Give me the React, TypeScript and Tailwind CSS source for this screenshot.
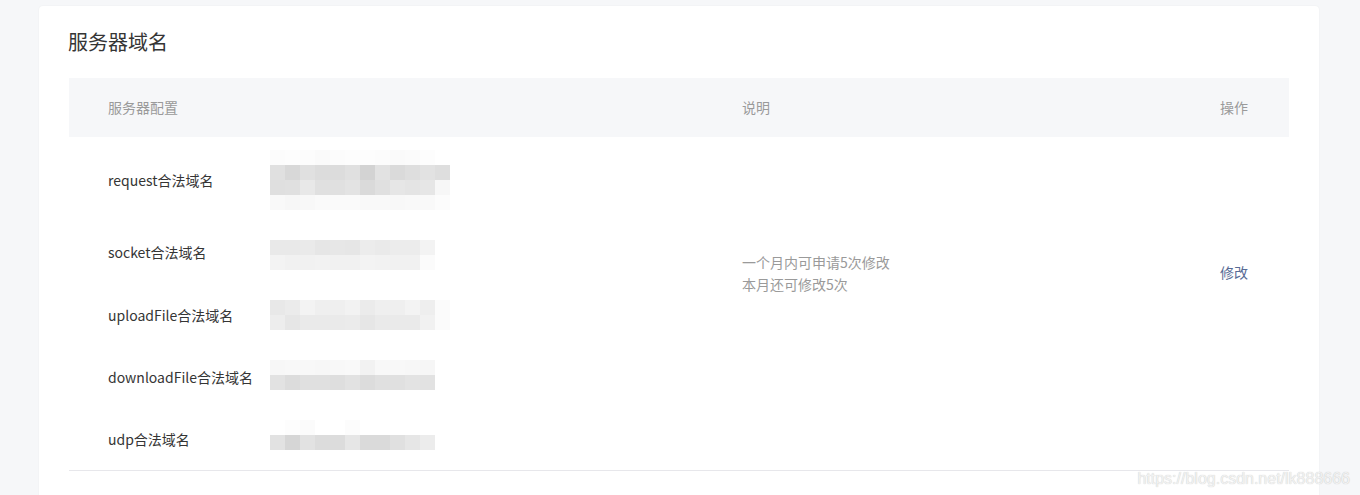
const req = [
  ['bg-[#fcfcfc]', 'bg-[#fdfdfd]', 'bg-[#fcfcfc]', 'bg-[#fafafa]', 'bg-[#fcfcfc]', 'bg-[#fdfdfd]', 'bg-[#fdfdfd]', 'bg-[#fcfcfc]', 'bg-[#fafafa]', 'bg-[#fbfbfb]', 'bg-[#fdfdfd]', 'bg-[#ffffff]'],
  ['bg-[#e0e0e0]', 'bg-[#d8d8d8]', 'bg-[#e0e0e0]', 'bg-[#dcdcdc]', 'bg-[#dcdcdc]', 'bg-[#e0e0e0]', 'bg-[#d3d3d3]', 'bg-[#e2e2e2]', 'bg-[#dadada]', 'bg-[#dedede]', 'bg-[#e2e2e2]', 'bg-[#dedede]'],
  ['bg-[#dfdfdf]', 'bg-[#e0e0e0]', 'bg-[#e8e8e8]', 'bg-[#e0e0e0]', 'bg-[#e0e0e0]', 'bg-[#e3e3e3]', 'bg-[#dadada]', 'bg-[#e0e0e0]', 'bg-[#e6e6e6]', 'bg-[#e4e4e4]', 'bg-[#e6e6e6]', 'bg-[#f7f7f7]'],
  ['bg-[#f9f9f9]', 'bg-[#f7f7f7]', 'bg-[#f8f8f8]', 'bg-[#fafafa]', 'bg-[#fafafa]', 'bg-[#fafafa]', 'bg-[#f9f9f9]', 'bg-[#f9f9f9]', 'bg-[#f8f8f8]', 'bg-[#f9f9f9]', 'bg-[#f9f9f9]', 'bg-[#fcfcfc]'],
]
const socket = [
  ['bg-[#e9e9e9]', 'bg-[#e9e9e9]', 'bg-[#eaeaea]', 'bg-[#e6e6e6]', 'bg-[#e7e7e7]', 'bg-[#e6e6e6]', 'bg-[#ececec]', 'bg-[#eaeaea]', 'bg-[#ececec]', 'bg-[#ececec]', 'bg-[#f3f3f3]'],
  ['bg-[#f3f3f3]', 'bg-[#f1f1f1]', 'bg-[#f1f1f1]', 'bg-[#f2f2f2]', 'bg-[#f1f1f1]', 'bg-[#f1f1f1]', 'bg-[#f3f3f3]', 'bg-[#f2f2f2]', 'bg-[#f1f1f1]', 'bg-[#f1f1f1]', 'bg-[#fbfbfb]'],
]
const upload = [
  ['bg-[#e8e8e8]', 'bg-[#ebebeb]', 'bg-[#f3f3f3]', 'bg-[#efefef]', 'bg-[#efefef]', 'bg-[#f2f2f2]', 'bg-[#ebebeb]', 'bg-[#efefef]', 'bg-[#efefef]', 'bg-[#f3f3f3]', 'bg-[#eeeeee]', 'bg-[#fbfbfb]'],
  ['bg-[#ededed]', 'bg-[#e6e6e6]', 'bg-[#eaeaea]', 'bg-[#eaeaea]', 'bg-[#eaeaea]', 'bg-[#ebebeb]', 'bg-[#e6e6e6]', 'bg-[#eaeaea]', 'bg-[#eaeaea]', 'bg-[#eaeaea]', 'bg-[#f1f1f1]', 'bg-[#fbfbfb]'],
]
const download = [
  ['bg-[#f7f7f7]', 'bg-[#f8f8f8]', 'bg-[#f8f8f8]', 'bg-[#f7f7f7]', 'bg-[#f8f8f8]', 'bg-[#f9f9f9]', 'bg-[#f2f2f2]', 'bg-[#f8f8f8]', 'bg-[#f8f8f8]', 'bg-[#f7f7f7]', 'bg-[#f6f6f6]'],
  ['bg-[#e2e2e2]', 'bg-[#dcdcdc]', 'bg-[#e0e0e0]', 'bg-[#e0e0e0]', 'bg-[#dedede]', 'bg-[#e2e2e2]', 'bg-[#dcdcdc]', 'bg-[#e0e0e0]', 'bg-[#e0e0e0]', 'bg-[#e3e3e3]', 'bg-[#e2e2e2]'],
]
const udp = [
  ['bg-[#ffffff]', 'bg-[#fdfdfd]', 'bg-[#fbfbfb]', 'bg-[#ffffff]', 'bg-[#ffffff]', 'bg-[#fcfcfc]', 'bg-[#ffffff]', 'bg-[#ffffff]', 'bg-[#ffffff]', 'bg-[#ffffff]', 'bg-[#ffffff]'],
  ['bg-[#e2e2e2]', 'bg-[#d6d6d6]', 'bg-[#e2e2e2]', 'bg-[#dcdcdc]', 'bg-[#dcdcdc]', 'bg-[#e6e6e6]', 'bg-[#dadada]', 'bg-[#dadada]', 'bg-[#e0e0e0]', 'bg-[#e6e6e6]', 'bg-[#ececec]'],
]

// labels don't sit exactly on the mosaic's centre in the screenshot
const domains = [
  { label: 'request合法域名', blur: req, nudge: '' },
  { label: 'socket合法域名', blur: socket, nudge: 'mb-[6px]' },
  { label: 'uploadFile合法域名', blur: upload, nudge: '' },
  { label: 'downloadFile合法域名', blur: download, nudge: 'mt-[4px]' },
  { label: 'udp合法域名', blur: udp, nudge: 'mt-[8px]' },
]

// pixelated (mosaic) stand-in for the hidden domain value
function Mosaic({ rows }: { rows: string[][] }) {
  return (
    <div className="flex flex-col">
      {rows.map((row, i) => (
        <div key={i} className="flex">
          {row.map((c, j) => (
            <div key={j} className={`h-[15px] w-[15px] ${c}`} />
          ))}
        </div>
      ))}
    </div>
  )
}

export default function App() {
  return (
    <div className="relative h-[495px] overflow-hidden bg-[#f6f7f9] pl-[39px] pr-[41px] pt-[6px] font-['Noto_Sans_CJK_SC','Noto_Sans',sans-serif]">
      <div className="h-[600px] rounded-[4px] bg-white px-[30px] shadow-[0_0_2px_rgba(0,0,0,0.06)]">
        <h2 className="flex h-[72px] items-center pb-[1px] text-[20px] font-normal text-[#353535]">
          <span className="-ml-px">服务器域名</span>
        </h2>

        <div className="border-b border-[#e7e7eb]">
          <div className="flex h-[59px] items-center bg-[#f6f7f9] text-[14px] text-[#9a9a9a]">
            <div className="w-[673px] pl-[39px]">服务器配置</div>
            <div className="flex-1">说明</div>
            <div className="pr-[41px]">操作</div>
          </div>

          <div className="flex pb-[20px] pt-[13px]">
            <div className="flex w-[673px] flex-col gap-[30px] pl-[39px]">
              {domains.map((d) => (
                <div key={d.label} className="flex items-center">
                  <div className={`w-[162px] text-[14px] leading-[22px] text-[#353535] ${d.nudge}`}>{d.label}</div>
                  <Mosaic rows={d.blur} />
                </div>
              ))}
            </div>
            <div className="flex-1 pt-[101px] text-[14px] leading-[22px] text-[#9a9a9a]">
              <div>一个月内可申请5次修改</div>
              <div>本月还可修改5次</div>
            </div>
            <div className="pr-[41px] pt-[111px] text-[14px] leading-[22px] text-[#576b95]">修改</div>
          </div>
        </div>
      </div>

      <div className="absolute bottom-[6px] right-[10px] font-['Liberation_Sans',Arial,sans-serif] text-[16px] leading-[20px] text-[#f2f2f2] [text-shadow:0_0_1px_rgba(0,0,0,0.25)]">
        https://blog.csdn.net/lk888666
      </div>
    </div>
  )
}
